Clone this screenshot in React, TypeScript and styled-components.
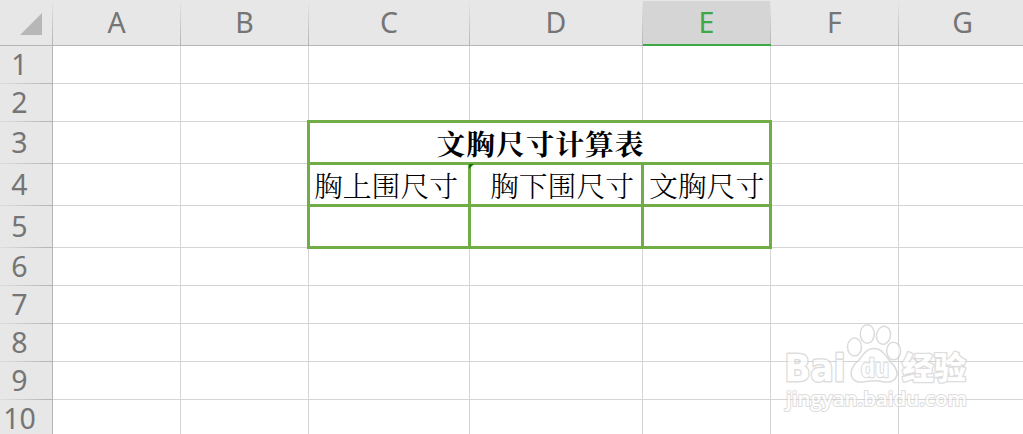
import React from 'react';
import styled, {createGlobalStyle} from 'styled-components';

const columns = ['A', 'B', 'C', 'D', 'E', 'F', 'G'];
const rows = [1, 2, 3, 4, 5, 6, 7, 8, 9, 10];
const activeColumn = 'E';

export default function App() {
  return (
    <>
      <GlobalStyle />
      <Sheet>
        <Corner>
          <SelectAll viewBox='0 0 22 22'>
            <path d='M22 0V22H0Z' fill='#b7b7b7' />
          </SelectAll>
        </Corner>
        {columns.map((name) => (
          <ColumnHead key={name} $active={name === activeColumn}>{name}</ColumnHead>
        ))}
        {rows.map((row) => (
          <React.Fragment key={row}>
            <RowHead $row={row}>{row}</RowHead>
            {columns.map((name, i) => <Cell key={name} $row={row} $col={i} />)}
          </React.Fragment>
        ))}
        <SizeTable>
          <TitleCell>文胸尺寸计算表</TitleCell>
          <TableCell $indent={4}>胸上围尺寸</TableCell>
          <TableCell $indent={19}><ErrorMark />胸下围尺寸</TableCell>
          <TableCell $indent={5}>文胸尺寸</TableCell>
          <TableCell />
          <TableCell />
          <TableCell />
        </SizeTable>
        <Watermark />
      </Sheet>
    </>
  );
}

function Watermark() {
  return (
    <WatermarkSvg viewBox='0 0 190 94'>
      <g fill='#ffffff' stroke='#cdcdcd' strokeWidth='1.5'>
        <ellipse cx='71.5' cy='27' rx='7' ry='9' />
        <ellipse cx='84.3' cy='14' rx='7' ry='9.3' />
        <ellipse cx='100.5' cy='15.3' rx='7' ry='9' transform='rotate(12 100.5 15.3)' />
        <ellipse cx='110.6' cy='31' rx='7' ry='8.8' />
        <path d='M91 28.500C83 28.500 81 34 76 40C70 45 67 51 68.500 56C71 63 77 62.500 83 61.500C89 60.500 94 60.500 99 61.500C106 63 112 62 114 55C115 49 110 45 106 40C101 34 99 28.500 91 28.500Z' />
      </g>
      <Brand x='1.5' y='60.5' textLength='61' lengthAdjust='spacingAndGlyphs'>Bai</Brand>
      <Du x='78' y='56.5' textLength='28' lengthAdjust='spacingAndGlyphs'>du</Du>
      <Chinese x='119' y='58.5' textLength='64' lengthAdjust='spacingAndGlyphs'>经验</Chinese>
      <Site x='3' y='85.5' textLength='181' lengthAdjust='spacingAndGlyphs'>jingyan.baidu.com</Site>
    </WatermarkSvg>
  );
}

const GlobalStyle = createGlobalStyle`
  body {
    margin: 0;
    overflow: hidden;
    background: #ffffff;
  }
`;

const Sheet = styled.main`
  position: relative;
  width: 1023px;
  height: 434px;
  overflow: hidden;
  display: grid;
  grid-template-columns: 53px 128px 128px 161px 173px 128px 128px 128px;
  grid-template-rows: 46px 38px 38px 42px 42px 42px 38px 38px 38px 38px 38px;
  font-family: 'Noto Sans', 'Open Sans', sans-serif;
  font-size: 28.5px;
  color: #757575;
`;

const Corner = styled.div`
  box-sizing: border-box;
  display: flex;
  justify-content: flex-end;
  padding: 13px 11px 0 0;
  background: linear-gradient(#e7e7e7, #b3b3b3) right / 1px 100% no-repeat #e7e7e7;
  border-bottom: 1px solid #b5b5b5;
`;

const SelectAll = styled.svg`
  width: 22px;
  height: 22px;
`;

const ColumnHead = styled.div<{$active: boolean}>`
  box-sizing: border-box;
  height: 46px;
  padding-right: 1px;
  text-align: center;
  line-height: 45px;
  color: ${({$active}) => ($active ? '#3ea845' : '#757575')};
  background: linear-gradient(#e7e7e7, #b3b3b3) right / 1px 100% no-repeat
    ${({$active}) => ($active ? '#d5d5d5' : '#e7e7e7')};
  box-shadow: ${({$active}) => ($active
    ? 'inset 0 1px #e7e7e7, inset 0 -2px #3ea845'
    : 'inset 0 -1px #b5b5b5')};
`;

const RowHead = styled.div<{$row: number}>`
  grid-column: 1;
  grid-row: ${({$row}) => $row + 1};
  box-sizing: border-box;
  display: flex;
  align-items: center;
  justify-content: center;
  padding: 0 13px 2px 0;
  line-height: 34px;
  border-right: 1px solid #b5b5b5;
  background: linear-gradient(90deg, #dedede, #b3b3b3) bottom / 100% 1px no-repeat #e7e7e7;
`;

const Cell = styled.div<{$row: number; $col: number}>`
  grid-column: ${({$col}) => $col + 2};
  grid-row: ${({$row}) => $row + 1};
  border-right: 1px solid #d4d4d4;
  border-bottom: 1px solid #d4d4d4;
`;

const SizeTable = styled.section`
  position: relative;
  grid-column: 4 / 7;
  grid-row: 4 / 7;
  margin: -2px -1px -1px -2px;
  padding: 3px;
  display: grid;
  grid-template-columns: 158px 170px 125px;
  grid-template-rows: 39px 39px 39px;
  gap: 3px;
  background: #70ad47;
  color: #000000;
  font-family: 'SimSun', 'Noto Serif CJK SC', 'Noto Sans CJK SC', serif;
`;

const TitleCell = styled.div`
  grid-column: 1 / -1;
  padding-left: 2px;
  text-align: center;
  line-height: 39px;
  font-size: 28.8px;
  font-weight: 700;
  letter-spacing: 0.9px;
  background: #ffffff;
`;

const TableCell = styled.div<{$indent?: number}>`
  position: relative;
  padding-left: ${({$indent = 0}) => $indent}px;
  line-height: 39px;
  font-size: 28.8px;
  font-weight: 300;
  white-space: nowrap;
  background: #ffffff;
`;

const ErrorMark = styled.span`
  position: absolute;
  top: -1px;
  left: -2px;
  border-top: 5px solid #0b7a0b;
  border-right: 5px solid transparent;
`;

const WatermarkSvg = styled.svg`
  position: absolute;
  left: 783px;
  top: 320px;
  width: 190px;
  height: 94px;
  opacity: 0.7;
`;

const MarkText = styled.text`
  fill: #ffffff;
  stroke: #d0d0d0;
  stroke-linejoin: round;
  paint-order: stroke;
`;

const Brand = styled(MarkText)`
  font: 700 38px 'DejaVu Sans', sans-serif;
  stroke-width: 3px;
`;

const Du = styled(MarkText)`
  font: 700 25px 'Liberation Sans', sans-serif;
  stroke-width: 2.4px;
`;

const Chinese = styled(MarkText)`
  font: 900 31px 'Noto Sans CJK SC', sans-serif;
  stroke-width: 2.6px;
`;

const Site = styled(MarkText)`
  font: 600 20px 'Open Sans', sans-serif;
  stroke-width: 2px;
`;
